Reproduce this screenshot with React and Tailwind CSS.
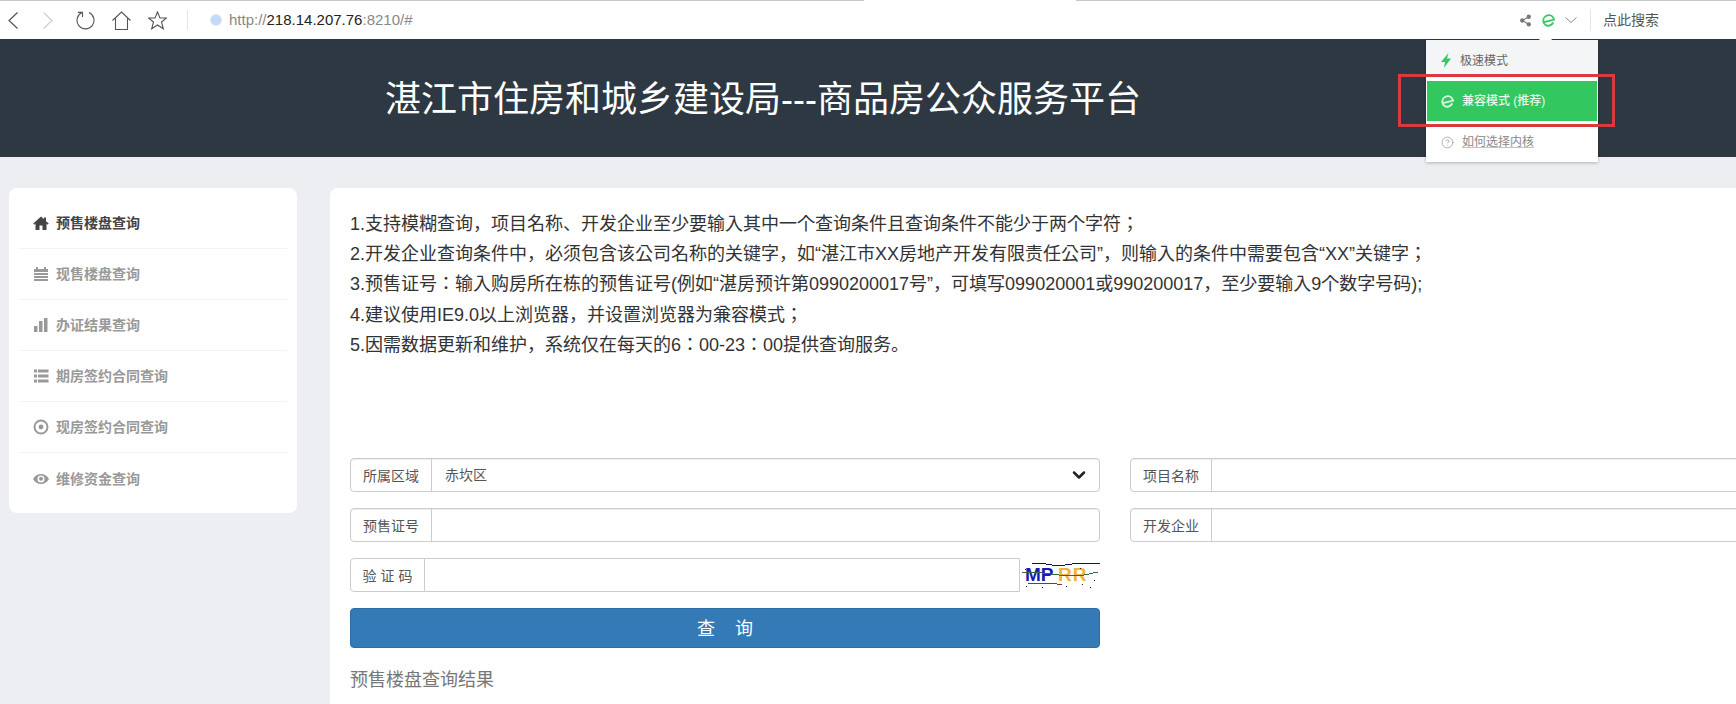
import { Share2, CircleHelp, ChevronDown } from 'lucide-react';

const sideItems = [
    { label: '预售楼盘查询', icon: 'home', active: true },
    { label: '现售楼盘查询', icon: 'calendar' },
    { label: '办证结果查询', icon: 'chart' },
    { label: '期房签约合同查询', icon: 'list' },
    { label: '现房签约合同查询', icon: 'target' },
    { label: '维修资金查询', icon: 'eye' },
];

const notices = [
    '1.支持模糊查询，项目名称、开发企业至少要输入其中一个查询条件且查询条件不能少于两个字符；',
    '2.开发企业查询条件中，必须包含该公司名称的关键字，如“湛江市XX房地产开发有限责任公司”，则输入的条件中需要包含“XX”关键字；',
    '3.预售证号：输入购房所在栋的预售证号(例如“湛房预许第0990200017号”，可填写099020001或990200017，至少要输入9个数字号码);',
    '4.建议使用IE9.0以上浏览器，并设置浏览器为兼容模式；',
    '5.因需数据更新和维护，系统仅在每天的6：00-23：00提供查询服务。',
];

function SideIcon({ name }) {
    if (name === 'home') {
        return <svg viewBox="0 0 16 16" className="w-[16px] h-[16px]" fill="currentColor"><path d="M8 1.500 .3 8.600l1 1.100L2.500 8.600V15h4v-4.500h3V15h4V8.600l1.200 1.100 1-1.100L13 6.200V2.500h-2.200v1.700z" /></svg>;
    }
    if (name === 'calendar') {
        return <svg viewBox="0 0 16 16" className="w-[16px] h-[16px]" fill="currentColor"><path d="M3 1h2v2h6V1h2v2h2v3H1V3h2zM1 7h14v2H1zM1 10h14v2H1zM1 13h14v2H1z" /></svg>;
    }
    if (name === 'chart') {
        return <svg viewBox="0 0 16 16" className="w-[16px] h-[16px]" fill="currentColor"><path d="M1 9h3.500v6H1zM6 4h3.500v11H6zM11 1h3.500v14H11z" /></svg>;
    }
    if (name === 'list') {
        return <svg viewBox="0 0 16 16" className="w-[16px] h-[16px]" fill="currentColor"><path d="M1 1.500h3v3H1zM5 1.500h10.500v3H5zM1 6.500h3v3H1zM5 6.500h10.500v3H5zM1 11.500h3v3H1zM5 11.500h10.500v3H5z" /></svg>;
    }
    if (name === 'target') {
        return <svg viewBox="0 0 16 16" className="w-[16px] h-[16px]" fill="none" stroke="currentColor"><circle cx="8" cy="8" r="6.500" strokeWidth="2" /><circle cx="8" cy="8" r="2.400" fill="currentColor" stroke="none" /></svg>;
    }
    return <svg viewBox="0 0 16 16" className="w-[16px] h-[16px]" fill="currentColor"><path fillRule="evenodd" d="M0 8C2 4.600 4.800 3 8 3s6 1.600 8 5c-2 3.400-4.800 5-8 5S2 11.400 0 8zM8 4.500a3.500 3.500 0 1 0 0 7 3.500 3.500 0 0 0 0-7z" /><circle cx="8" cy="7.800" r="2" /></svg>;
}

// IE "e" mark used by the browser's mode switch
function IeMark({ className }) {
    return (
        <svg viewBox="0 0 16 16" className={className} fill="none" stroke="currentColor" strokeWidth="2">
            <path transform="rotate(-14 8 8)" d="M3 8.600H14C14 5 11.500 2.500 8.400 2.500 5 2.500 2.400 5 2.400 8.300c0 3.200 2.400 5.200 5.500 5.200 2 0 3.500-.8 4.500-2.300" />
        </svg>
    );
}

function InputGroup({ label, children }) {
    return (
        <div className="flex h-[34px] border border-[#cccccc] rounded-[4px] bg-white shadow-[inset_0_1px_1px_rgba(0,0,0,0.075)]">
            <div className="w-[81px] shrink-0 flex items-center justify-center pt-[2px] border-r border-[#cccccc] text-[14px] text-[#555555]">
                {label}
            </div>
            <div className="flex-1 flex items-center justify-between px-[13px] text-[14px] text-[#555555]">{children}</div>
        </div>
    );
}

function Captcha() {
    return (
        <svg viewBox="0 0 78 30" className="w-[78px] h-[30px] shrink-0">
            <text x="3" y="21" fontFamily="Liberation Sans" fontWeight="700" fontSize="19" fill="#1a1ab4">MP</text>
            <text x="36" y="21" fontFamily="Liberation Sans" fontWeight="700" fontSize="19" letterSpacing="1" fill="#eeb33a">RR</text>
            <g shapeRendering="crispEdges" fill="none" strokeWidth="1">
                <path d="M10 3 24 4 36 6 50 4 78 3" stroke="#14145c" />
                <path d="M0 12 20 13 46 16 62 15 76 12" stroke="#2f6b3c" />
                <path d="M6 24 30 23 40 25" stroke="#8c2f3c" />
            </g>
            <path d="M4 26h1v1H4zM20 27h1v1h-1zM44 26h1v1h-1zM60 24h1v1h-1zM68 27h1v1h-1zM72 20h1v1h-1zM3 9h1v1H3zM58 8h1v1h-1z" fill="#222222" />
        </svg>
    );
}

export default function App() {
    return (
        <div className="relative h-[704px] w-[1736px] overflow-hidden bg-[#eceef1] font-['Liberation_Sans','Noto_Sans_CJK_SC',sans-serif]">
            {/* Window edge, broken where the tab sits */}
            <div className="flex h-px bg-[#c8c8c8]">
                <div className="ml-[864px] w-[212px] bg-white" />
            </div>

            {/* Browser toolbar */}
            <div className="flex h-[38px] items-center bg-white text-[#555555]">
                <svg viewBox="0 0 10 17" className="ml-[8px] w-[10px] h-[17px]" fill="none" stroke="#555555" strokeWidth="1.2"><path d="M9.500 .5 1 8.500 9.500 16.500" /></svg>
                <svg viewBox="0 0 10 17" className="ml-[25px] w-[10px] h-[17px]" fill="none" stroke="#cfcfcf" strokeWidth="1.2"><path d="M.5 .5 9 8.500 .5 16.500" /></svg>
                <svg viewBox="0 0 19 19" className="ml-[23px] w-[19px] h-[19px]" fill="none" stroke="#555555" strokeWidth="1.100"><path d="M6 1.600A8.500 8.500 0 1 0 13 1.600M6.500 6V1.400H1.800" /></svg>
                <svg viewBox="0 0 19 19" className="ml-[17px] w-[19px] h-[19px]" fill="none" stroke="#555555" strokeWidth="1.100"><path d="M.5 9.500 9.500 1 18.500 9.500M3.500 7.500V18.500H15.500V7.500" /></svg>
                <svg viewBox="0 0 19 19" className="ml-[17px] w-[19px] h-[19px]" fill="none" stroke="#555555" strokeWidth="1.100"><path d="M9.500 1 12 7H18.500L13.500 11 15.300 17.800 9.500 14 3.700 17.800 5.500 11 .5 7H7z" /></svg>
                <div className="ml-[20px] h-[20px] w-px bg-[#e5e5e5]" />
                <div className="ml-[22px] w-[12px] h-[12px] rounded-full bg-[#c4d9f8] border border-[#dce8fb]" />
                <div className="ml-[7px] text-[15px] text-[#888888]">
                    http://<span className="text-[#222222]">218.14.207.76</span>:8210/#
                </div>
                <div className="flex-1" />
                <Share2 size={13} className="text-[#777777]" fill="currentColor" />
                <IeMark className="ml-[9px] w-[15px] h-[15px] text-[#35c864]" />
                <svg viewBox="0 0 12 6" className="ml-[9px] w-[12px] h-[6px]" fill="none" stroke="#888888"><path d="M.5 .5 6 5.500 11.500 .5" /></svg>
                <div className="ml-[13px] h-[22px] w-px bg-[#e5e5e5]" />
                <div className="ml-[12px] w-[133px] text-[14px] text-[#555555]">点此搜索</div>
            </div>

            {/* Site banner */}
            <div className="h-[118px] bg-[#2e3842] flex items-center pt-[3px] pl-[385px] text-[36px] text-white">
                湛江市住房和城乡建设局---商品房公众服务平台
            </div>

            <div className="flex items-start pt-[31px] pl-[9px] gap-[33px]">
                {/* Left menu */}
                <div className="w-[288px] shrink-0 bg-white rounded-[8px] px-[10px] pt-[10px] pb-[9px]">
                    {sideItems.map((item, i) => (
                        <div
                            key={item.label}
                            className={`flex items-center h-[51px] pl-[14px] gap-[7px] text-[14px] font-bold ${i < 5 ? 'border-b border-[#f2f3f5]' : ''} ${item.active ? 'text-[#444444]' : 'text-[#999999]'}`}
                        >
                            <SideIcon name={item.icon} />
                            <span className="pt-[1px]">{item.label}</span>
                        </div>
                    ))}
                </div>

                {/* Query panel */}
                <div className="w-[1500px] shrink-0 bg-white rounded-[8px] h-[600px] pl-[20px] pt-[21px]">
                    <div className="font-['Liberation_Sans','Noto_Sans_CJK_KR',sans-serif] text-[18px] leading-[30.2px] text-[#333333] whitespace-nowrap">
                        {notices.map((line) => <p key={line}>{line}</p>)}
                    </div>

                    <div className="mt-[98px] grid grid-cols-[750px_750px] gap-x-[30px] gap-y-[16px]">
                        <InputGroup label="所属区域">
                            <span>赤坎区</span>
                            <ChevronDown size={20} strokeWidth={3} className="text-[#222222] mr-[-3px]" />
                        </InputGroup>
                        <InputGroup label="项目名称" />
                        <InputGroup label="预售证号" />
                        <InputGroup label="开发企业" />
                        <div className="flex items-center gap-[2px]">
                            <div className="flex-1 flex h-[34px] border border-[#cccccc] rounded-l-[4px] bg-white">
                                <div className="w-[74px] flex items-center justify-center pt-[2px] border-r border-[#cccccc] text-[14px] text-[#555555] whitespace-pre">验 证 码</div>
                            </div>
                            <Captcha />
                        </div>
                    </div>

                    <button className="mt-[16px] block w-[750px] h-[40px] pt-[2px] bg-[#337ab7] border border-[#2e6da4] rounded-[4px] text-[18px] text-white whitespace-pre">
                        查    询
                    </button>
                    <div className="mt-[21px] text-[18px] leading-[22px] text-[#777777]">预售楼盘查询结果</div>
                </div>
            </div>

            {/* Kernel switch dropdown */}
            <div className="absolute left-[1426px] top-[40px] w-[172px] h-[122px] bg-white shadow-[0_1px_3px_rgba(0,0,0,0.25)] text-[12px]">
                <div className="absolute left-[115px] top-[-5px] w-[9px] h-[9px] rotate-45 bg-white" />
                <div className="relative h-[38px] bg-[#f4f5f6] flex items-center pt-[3px] pl-[15px] gap-[9px] text-[#666666]">
                    <svg viewBox="0 0 10 15" className="w-[10px] h-[15px]" fill="#35c864"><path d="M7.500 0 0 9H4L3 15 10 5.500H6z" /></svg>
                    极速模式
                </div>
                <div className="mt-[3px] mx-px h-[40px] bg-[#32c85f] flex items-center pl-[13px] gap-[7px] font-medium text-[#e8f8ec]">
                    <IeMark className="w-[15px] h-[15px] text-[#d8f5e0]" />
                    兼容模式 (推荐)
                </div>
                <div className="mt-[1px] h-[40px] flex items-center pl-[15px] gap-[8px] text-[#888888]">
                    <CircleHelp size={13} strokeWidth={1.2} />
                    <span className="underline decoration-[#c4c4c4]">如何选择内核</span>
                </div>
            </div>

            {/* Annotation box from the original screenshot */}
            <div className="absolute left-[1398px] top-[74px] w-[217px] h-[53px] border-[3px] border-[#d83a3f]" />
        </div>
    );
}
